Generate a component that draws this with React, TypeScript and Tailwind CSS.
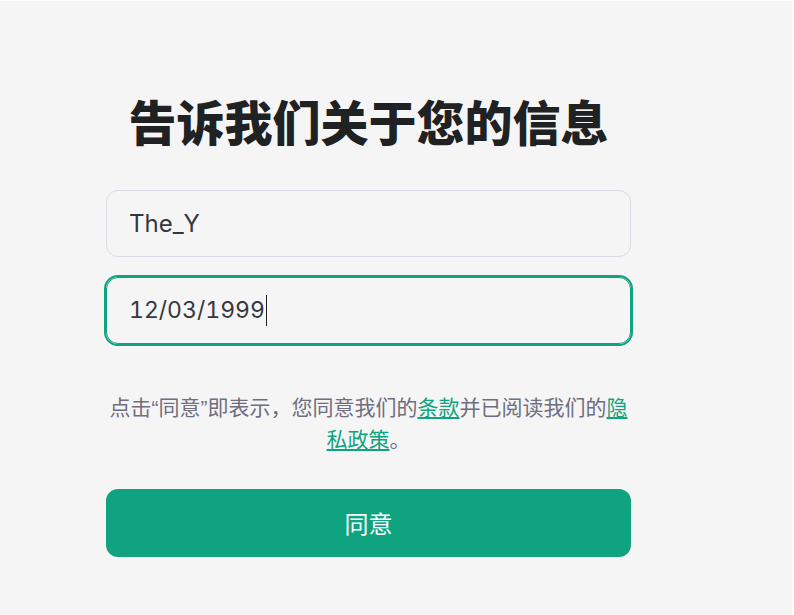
import React from 'react';

const App = () => {
  return (
    <div className="min-h-screen bg-[#f5f5f5] border-t border-r-2 border-white font-['Noto_Sans_CJK_SC','Noto_Sans',sans-serif]">
      <div className="ml-[106px] w-[525px] pt-[90px] flex flex-col">
        <h1 className="text-center text-[48px] font-black leading-[58px] text-[#202123]">
          告诉我们关于您的信息
        </h1>

        <div className="mt-[41px] h-[67px] flex items-center pl-[22px] rounded-xl border border-[#d9d9e3] bg-[#f5f5f5] font-['Inter',sans-serif] text-[24px] text-[#353740]">
          The_Y
        </div>

        <div className="mt-[20px] h-[67px] flex items-center pl-[22px] rounded-xl border border-[#10a37f] outline-2 outline-[#10a37f] bg-[#f5f5f5] font-['Inter',sans-serif] text-[23px] text-[#353740] tabular-nums">
          <span>12/03/1999</span>
          <span className="ml-px w-px h-[31px] bg-[#202123]" />
        </div>

        <p className="mt-[47px] text-center text-[21px] leading-[31px] text-[#6e6e80]">
          点击<span className="font-['Liberation_Sans',sans-serif]">“</span>同意
          <span className="font-['Liberation_Sans',sans-serif]">”</span>即表示，您同意我们的
          <a href="#" className="text-[#10a37f] underline underline-offset-2">
            条款
          </a>
          并已阅读我们的
          <a href="#" className="text-[#10a37f] underline underline-offset-2">
            隐私政策
          </a>
          。
        </p>

        <button
          type="button"
          className="mt-[35px] h-[68px] rounded-xl bg-[#10a37f] text-white text-[24px]"
        >
          同意
        </button>
      </div>
    </div>
  );
};

export default App;
